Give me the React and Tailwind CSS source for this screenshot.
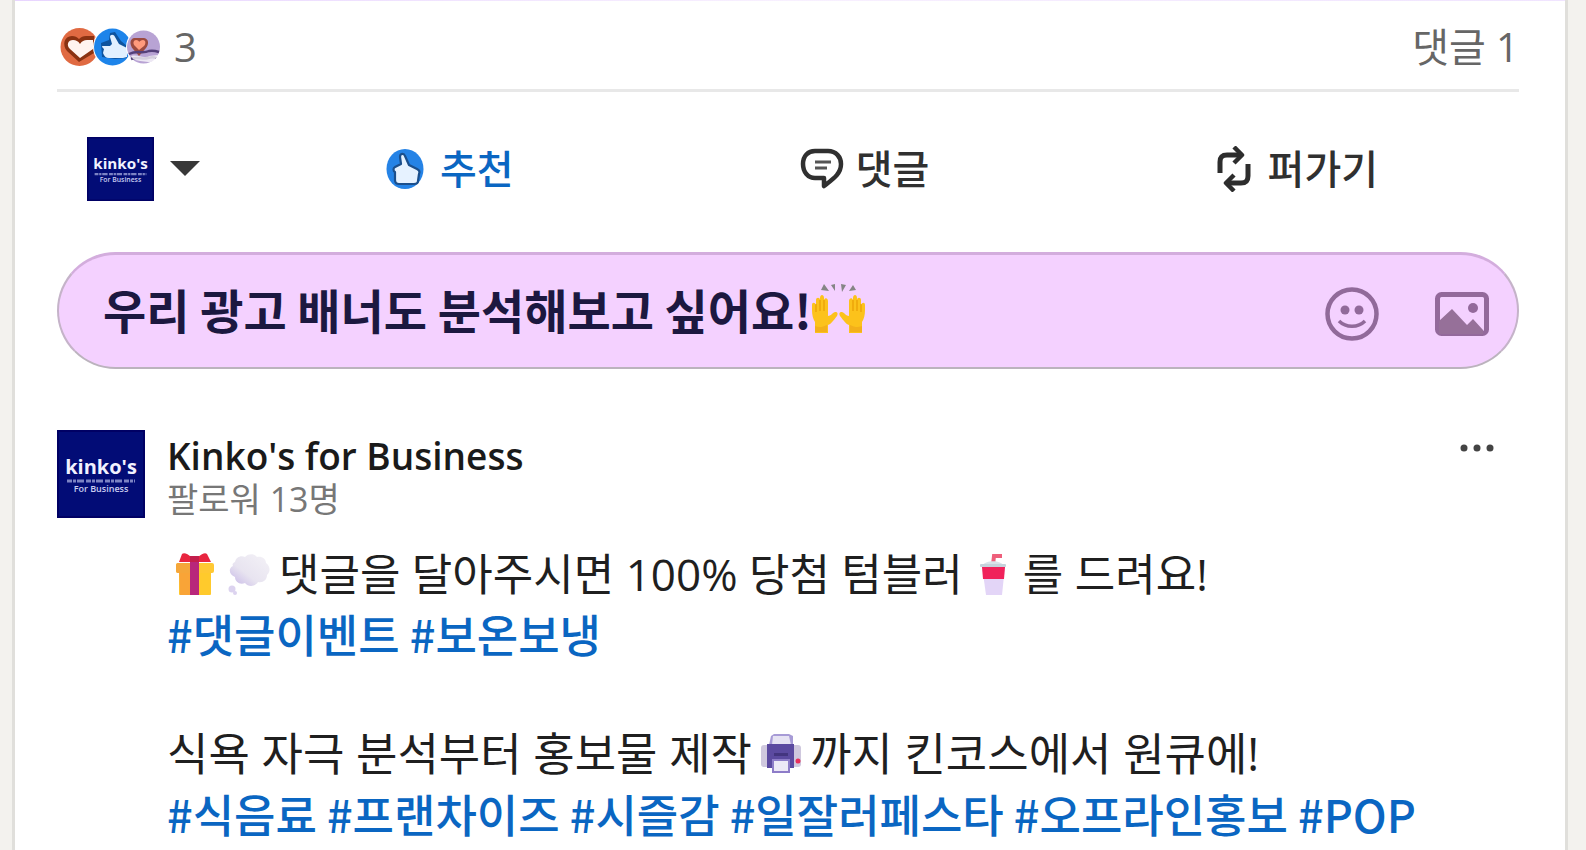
import React, { useState } from 'react';

const SANS = "font-['Open_Sans','Noto_Sans_CJK_KR',sans-serif]";

function Reactions() {
  return (
    <svg viewBox="60 26 102 40" className="w-[102px] h-10" aria-hidden="true">
      <circle cx="79.5" cy="46" r="19" fill="#e06a42" />
      <path d="M79 61 67 50c-5-6-3-15 5-15 3 0 5 1 7 3 2-2 4-3 7-3h8v17z" fill="#8a3212" />
      <path d="M80 57 70 48c-4-4-2-9 3-9 3 0 5 1 7 4 2-3 4-4 7-4h6v9z" fill="#fff4f0" />
      <circle cx="113" cy="46" r="20" fill="#fff" />
      <circle cx="112.5" cy="46" r="18.5" fill="#1d84ea" />
      <path d="M101 42l8-3 1-7 5-1 6 9 6 5v12l-12 1-13-2z" fill="#0d539e" />
      <path d="M102 45h8l2-2-2-7c0-3 4-3 5 0l4 7 8 4v9l-4 1h-14c-3 0-5-2-6-5l1-4c-2-1-2-3-2-4z" fill="#e1f0ff" />
      <circle cx="144" cy="46" r="18" fill="#fff" />
      <circle cx="143.5" cy="46" r="16.5" fill="#b8a3d4" />
      <path d="M139 55l-6-7c-4-5-3-10 1-11h10c5 1 5 6 2 10z" fill="#9c4a3f" />
      <path d="M139 49l-4-4c-3-3-1-6 1-6 2 0 3 1 3 2 1-1 2-2 4-2 3 0 3 4 1 6z" fill="#ff9a7c" />
      <path d="M129 53c8-4 14 0 20-3 4-1 7 0 10 1M131 58c7-3 11 1 17-1 3-1 6-1 8 0" stroke="#54407a" strokeWidth="2.5" fill="none" />
      <path d="M131 55c8-2 11 3 18 0l9-1c-2 4-6 8-10 7-5-1-11-1-15-3z" fill="#fff" opacity=".75" />
    </svg>
  );
}

function ThumbIcon() {
  return (
    <svg viewBox="0 0 38 42" className="w-[38px] h-[42px]" aria-hidden="true">
      <ellipse cx="19" cy="21" rx="18.5" ry="20" fill="#2583e6" />
      <path
        d="M9 19l6-3-1-7c0-4 4-4 5-1l4 9 8 4c2 1 3 3 2 5l-1 7c0 2-2 3-4 3H13c-3 0-4-2-4-4V24c-2-1-2-4 0-5z"
        fill="#e6f2ff"
        stroke="#1b4f8c"
        strokeWidth="2.2"
        strokeLinejoin="round"
      />
    </svg>
  );
}

function CommentIcon() {
  return (
    <svg viewBox="0 0 44 44" className="w-11 h-11" fill="none" stroke="#303030" strokeWidth="4.5" aria-hidden="true">
      <path d="M15 4h13c8 0 13 6 13 13 0 10-8 15-17 22v-8h-9C8 31 3 25 3 17S8 4 15 4z" strokeLinejoin="round" />
      <path d="M15 15h16M15 21h12" strokeWidth="3" stroke="#555" />
    </svg>
  );
}

function RepostIcon() {
  return (
    <svg viewBox="0 0 36 46" className="w-9 h-[46px]" fill="none" stroke="#2d2d2d" strokeWidth="5" strokeLinejoin="round" aria-hidden="true">
      <path d="M4 27V16c0-5 2-7 7-7h14" />
      <path d="M18 1l8 8-8 8" strokeWidth="4.5" />
      <path d="M32 18v12c0 5-2 7-7 7H10" />
      <path d="M18 29l-8 8 8 8" strokeWidth="4.5" />
    </svg>
  );
}

function SmileIcon() {
  return (
    <svg viewBox="0 0 54 54" className="w-[54px] h-[54px]" aria-hidden="true">
      <circle cx="27" cy="27" r="24.5" fill="none" stroke="#916a9a" strokeWidth="4.5" />
      <circle cx="20" cy="23" r="4.5" fill="#916a9a" />
      <circle cx="34" cy="23" r="4.5" fill="#916a9a" />
      <path d="M14 34c7 7 19 7 26 0" fill="none" stroke="#916a9a" strokeWidth="3.5" />
    </svg>
  );
}

function ImageIcon() {
  return (
    <svg viewBox="0 0 54 44" className="w-[54px] h-11" aria-hidden="true">
      <rect x="2.5" y="2.5" width="49" height="39" rx="4" fill="none" stroke="#93699b" strokeWidth="5" />
      <path d="M4 29l13-12 15 16 6-6 10 11v4H4z" fill="#967099" />
      <circle cx="38" cy="16" r="5" fill="#93699b" />
    </svg>
  );
}

function Hand({ flip }) {
  return (
    <g transform={flip ? 'translate(53 0) scale(-1 1)' : undefined}>
      <path
        d="M3 50V39c-2-3-3-7-3-12v-5c0-3 3-3 4 0v-5c0-3 4-3 4 0v-2c0-4 4-4 4 0v2c1-3 4-2 4 1v15c3 0 4-3 7-4 3 0 3 2 2 4-4 5-6 8-9 9v8z"
        fill="#fcc21b"
      />
      <path d="M4 21v8M8 17v11M12 17v11" stroke="#e59600" strokeWidth="1" fill="none" />
      <path d="M3 49v-6c4 2 8 1 12-1v7z" fill="#eda31a" opacity=".6" />
    </g>
  );
}

function RaisedHands() {
  return (
    <svg viewBox="0 0 53 52" className="w-[53px] h-[52px] shrink-0" role="img" aria-label="🙌">
      <path d="M9 7l3-6 5 7zM19 2l4-1v7zM29 1l5 1-4 7zM37 8l4-6 3 5z" fill="#858585" />
      <Hand />
      <Hand flip />
    </svg>
  );
}

function Gift() {
  return (
    <svg viewBox="0 0 40 44" className="w-10 h-11" role="img" aria-label="🎁">
      <rect x="4" y="17" width="32" height="26" rx="1" fill="#ffca2c" />
      <path d="M4 17h11v26H5z" fill="#f9a437" />
      <rect x="1" y="11" width="38" height="10" rx="2" fill="#ffc833" />
      <path d="M1 13c0-1 1-2 2-2h12v10H3c-1 0-2-1-2-2z" fill="#f5a63a" />
      <rect x="15" y="8" width="9" height="35" fill="#b8277b" />
      <path d="M4 10l3-8c2-2 6 0 9 3h7c4-3 7-5 9-3l4 8z" fill="#e8253f" />
      <path d="M15 4h9v6h-9z" fill="#c31e4c" />
    </svg>
  );
}

function Thought() {
  return (
    <svg viewBox="0 0 44 44" className="w-11 h-11" role="img" aria-label="💭">
      <defs>
        <linearGradient id="cloud" x1="1" y1="0" x2="0" y2="1">
          <stop offset="0" stopColor="#f4f2f7" />
          <stop offset=".6" stopColor="#e8e4f0" />
          <stop offset="1" stopColor="#c3b3e6" />
        </linearGradient>
      </defs>
      <path d="M8 10c1-5 6-7 10-5 4-4 10-3 12 0 5-1 9 2 9 6 4 3 5 8 1 12 0 5-4 8-9 7-3 5-10 5-13 1-5 2-10-1-10-6-6-2-7-9-2-11-1-2 0-3 2-4z" fill="url(#cloud)" />
      <circle cx="5" cy="37" r="3.5" fill="#dcd3ef" />
      <circle cx="8" cy="41" r="2" fill="#dcd3ef" />
    </svg>
  );
}

function Cup() {
  return (
    <svg viewBox="0 0 28 44" className="w-7 h-11" role="img" aria-label="🥤">
      <path d="M14 13l1-9h8" stroke="#ee5f7b" strokeWidth="4" fill="none" />
      <path d="M4 13c3-5 17-5 20 0z" fill="#d9e3ea" />
      <path d="M3 14h23l-3 29H7z" fill="#e3d5f7" />
      <path d="M3 15h23l-1 12H4z" fill="#f0225b" />
      <rect x="1" y="12" width="26" height="3" rx="1" fill="#c5d3dc" />
    </svg>
  );
}

function Printer() {
  return (
    <svg viewBox="0 0 42 42" className="w-[42px] h-[42px]" role="img" aria-label="🖨">
      <path d="M9 12l2-9 3-2h15l4 2v9z" fill="#a79bd6" />
      <path d="M13 3h16l2 9H12z" fill="#e6e3f3" />
      <rect x="1" y="12" width="40" height="22" rx="3" fill="#cfc8de" />
      <rect x="7" y="11" width="27" height="24" fill="#5b4aa0" />
      <rect x="14" y="20" width="14" height="3" fill="#43357f" />
      <path d="M13 27h16v12H13z" fill="#ece8f6" stroke="#8d7cc8" strokeWidth="2" />
      <circle cx="38" cy="28" r="2.5" fill="#e8305c" />
    </svg>
  );
}

function Logo({ small }) {
  return (
    <svg viewBox="0 0 88 88" preserveAspectRatio="none" className={small ? 'w-[67px] h-16' : 'w-22 h-22'} role="img" aria-label="kinko's for Business">
      <rect width="88" height="88" fill="#000064" />
      <rect x="2" y="2" width="84" height="84" fill="#020c76" />
      <text x="44" y="44" textAnchor="middle" fontFamily="Open Sans" fontWeight="700" fontSize="20" fill="#f1f2ff">kinko's</text>
      <path d="M10 51h68" stroke="#7c83c4" strokeWidth="3" strokeDasharray="5 1 3 1 7 2" />
      <text x="44" y="62" textAnchor="middle" fontFamily="Open Sans" fontWeight="600" fontSize="9" fill="#c9cdf0">For Business</text>
    </svg>
  );
}

function ActionButton({ icon, label, className }) {
  return (
    <button type="button" className={`flex items-center text-[40px] leading-[48px] font-medium ${className}`}>
      {icon}
      {label}
    </button>
  );
}

function Tag({ children }) {
  return (
    <a href="#tag" className="font-medium text-[#0a66c2]">
      #{children}
    </a>
  );
}

export default function App() {
  const [comment, setComment] = useState('우리 광고 배너도 분석해보고 싶어요!');

  return (
    <div className={`min-h-screen bg-[#f3f2ee] pl-3 pr-[18px] ${SANS}`}>
      <main className="min-h-screen bg-white border-x-3 border-[#e0dfdb]">
        <div className="h-px bg-linear-to-r from-[#e8d5ff] via-[#f8f0ff] to-[#f0e4ff]" />

        <div className="pl-[42px] pr-[46px]">
          {/* Reaction summary */}
          <div className="flex items-center justify-between h-[91px] pt-1 pl-[3px] border-b-3 border-[#e8e8e8] text-[40px] text-[#666]">
            <div className="flex items-center gap-3">
              <Reactions />
              <span>3</span>
            </div>
            <span>댓글 1</span>
          </div>

          {/* Actions */}
          <div className="flex items-center h-[154px] pl-[30px] pr-[141px]">
            <button type="button" aria-label="프로필 선택" className="flex items-center gap-4">
              <Logo small />
              <svg viewBox="0 0 30 16" className="w-[30px] h-4" aria-hidden="true">
                <path d="M0 0h30L15 15z" fill="#383838" />
              </svg>
            </button>
            <div className="flex flex-1 items-center justify-between pl-[186px]">
              <ActionButton icon={<ThumbIcon />} label="추천" className="gap-4 text-[#0a66c2]" />
              <ActionButton icon={<CommentIcon />} label="댓글" className="gap-3 text-[#303030]" />
              <ActionButton icon={<RepostIcon />} label="퍼가기" className="gap-4 text-[#303030]" />
            </div>
          </div>

          {/* Comment box */}
          <div className="mt-1.5 flex items-center justify-between h-[117px] pl-11 pr-7 rounded-full bg-[#f4d1ff] border-t-3 border-x-2 border-b-2 border-t-[#d3addd] border-x-[#c5b3c9] border-b-[#bbb3bd]">
            <div className="flex items-center min-w-0 pb-1">
              <input
                type="text"
                aria-label="댓글"
                value={comment}
                onChange={(e) => setComment(e.target.value)}
                className="field-sizing-content bg-transparent outline-none text-[47px] leading-[60px] font-bold text-[#1c1840] font-['Noto_Sans_CJK_KR',sans-serif]"
              />
              <RaisedHands />
            </div>
            <div className="flex items-center gap-14 pt-1.5">
              <button type="button" aria-label="이모지"><SmileIcon /></button>
              <button type="button" aria-label="사진"><ImageIcon /></button>
            </div>
          </div>

          {/* Comment */}
          <article className="flex gap-[22px] mt-[61px]">
            <div className="shrink-0">
              <Logo />
            </div>
            <div className="flex-1 min-w-0">
              <header className="flex items-start justify-between">
                <div>
                  <h3 className="mt-1 text-[37px] leading-[44px] font-semibold text-[#1a1a1a]">Kinko's for Business</h3>
                  <p className="text-[34px] leading-[42px] text-[#777]">팔로워 13명</p>
                </div>
                <button type="button" aria-label="더보기" className="mt-3 mr-6">
                  <svg viewBox="0 0 36 12" className="w-9 h-3" fill="#444" aria-hidden="true">
                    <circle cx="5" cy="6" r="3.5" />
                    <circle cx="18" cy="6" r="3.5" />
                    <circle cx="31" cy="6" r="3.5" />
                  </svg>
                </button>
              </header>
              <div className="mt-6 text-[45px] leading-[60px] text-[#1f1f1f] whitespace-nowrap">
                <p className="flex items-center text-[44px]">
                  <span className="flex items-center gap-3 px-2">
                    <Gift />
                    <Thought />
                  </span>
                  댓글을 달아주시면 100% 당첨 텀블러
                  <span className="flex px-4"><Cup /></span>
                  를 드려요!
                </p>
                <p className="font-['Noto_Sans_CJK_KR',sans-serif]"><Tag>댓글이벤트</Tag> <Tag>보온보냉</Tag></p>
                <br />
                <p className="flex items-center">
                  식욕 자극 분석부터 홍보물 제작
                  <span className="flex px-2"><Printer /></span>
                  까지 킨코스에서 원큐에!
                </p>
                <p className="font-['Noto_Sans_CJK_KR',sans-serif]">
                  <Tag>식음료</Tag> <Tag>프랜차이즈</Tag> <Tag>시즐감</Tag> <Tag>일잘러페스타</Tag> <Tag>오프라인홍보</Tag> <Tag>POP</Tag>
                </p>
              </div>
            </div>
          </article>
        </div>
      </main>
    </div>
  );
}
